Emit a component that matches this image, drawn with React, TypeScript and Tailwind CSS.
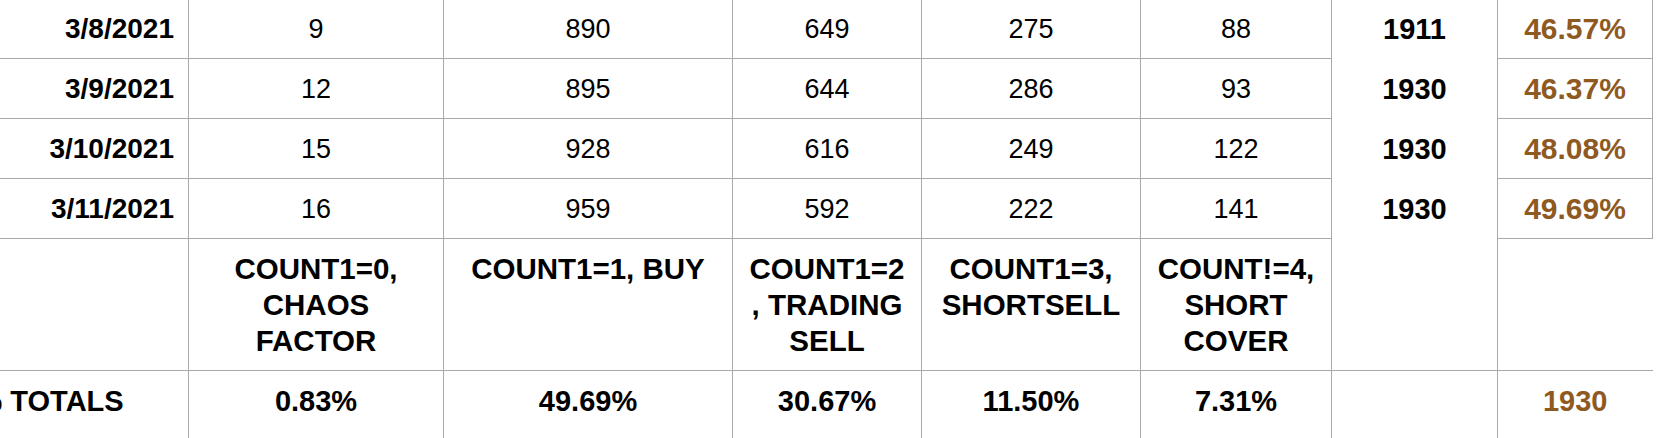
import React from "react";

type Row = {
  date: string;
  counts: number[];
  total: number;
  pct: string;
};

const rows: Row[] = [
  { date: "3/8/2021", counts: [9, 890, 649, 275, 88], total: 1911, pct: "46.57%" },
  { date: "3/9/2021", counts: [12, 895, 644, 286, 93], total: 1930, pct: "46.37%" },
  { date: "3/10/2021", counts: [15, 928, 616, 249, 122], total: 1930, pct: "48.08%" },
  { date: "3/11/2021", counts: [16, 959, 592, 222, 141], total: 1930, pct: "49.69%" },
];

const labels: string[][] = [
  ["COUNT1=0,", "CHAOS", "FACTOR"],
  ["COUNT1=1, BUY"],
  ["COUNT1=2", ", TRADING", "SELL"],
  ["COUNT1=3,", "SHORTSELL"],
  ["COUNT!=4,", "SHORT", "COVER"],
];

const totals = ["0.83%", "49.69%", "30.67%", "11.50%", "7.31%"];

// shared cell look: grey grid line, text sits near the top of the cell
const cell = "border-[#a9a9a9] pt-[12px] pb-[11px] px-[14px] align-top leading-[36px]";

export default function App() {
  return (
    <div
      className="h-[438px] w-[1656px] overflow-hidden bg-white text-[27px] text-black"
      style={{ fontFamily: '"Liberation Sans", Arial, Helvetica, sans-serif' }}
    >
      <table className="-ml-[38px] -mt-[2px] w-[1690px] table-fixed border-collapse">
        <colgroup>
          <col className="w-[226px]" />
          <col className="w-[255px]" />
          <col className="w-[289px]" />
          <col className="w-[189px]" />
          <col className="w-[219px]" />
          <col className="w-[191px]" />
          <col className="w-[166px]" />
          <col className="w-[155px]" />
        </colgroup>
        <tbody>
          {rows.map((r) => (
            <tr key={r.date}>
              <td className={`${cell} border text-right text-[28px] font-bold`}>{r.date}</td>
              {r.counts.map((c, i) => (
                <td key={i} className={`${cell} border text-center`}>
                  {c}
                </td>
              ))}
              <td className={`${cell} border-x text-center text-[29px] font-bold`}>{r.total}</td>
              <td className={`${cell} border text-center text-[30px] font-bold text-[#8f5a21]`}>
                {r.pct}
              </td>
            </tr>
          ))}

          <tr>
            <td className={`${cell} border`}></td>
            {labels.map((lines, i) => (
              <td key={i} className={`${cell} border text-center text-[29.5px] font-bold`}>
                {lines.map((l) => (
                  <div key={l} className="whitespace-nowrap">
                    {l}
                  </div>
                ))}
              </td>
            ))}
            <td className={`${cell} border-x border-b`}></td>
            <td className={`${cell} border-l border-b`}></td>
          </tr>

          <tr>
            <td className={`${cell} h-[90px] border-r whitespace-nowrap text-left text-[29px] font-bold`}>
              % TOTALS
            </td>
            {totals.map((t) => (
              <td key={t} className={`${cell} border-x text-center text-[29px] font-bold`}>
                {t}
              </td>
            ))}
            <td className={`${cell} border-x`}></td>
            <td className={`${cell} border-l text-center text-[29px] font-bold text-[#8f5a21]`}>1930</td>
          </tr>
        </tbody>
      </table>
    </div>
  );
}
